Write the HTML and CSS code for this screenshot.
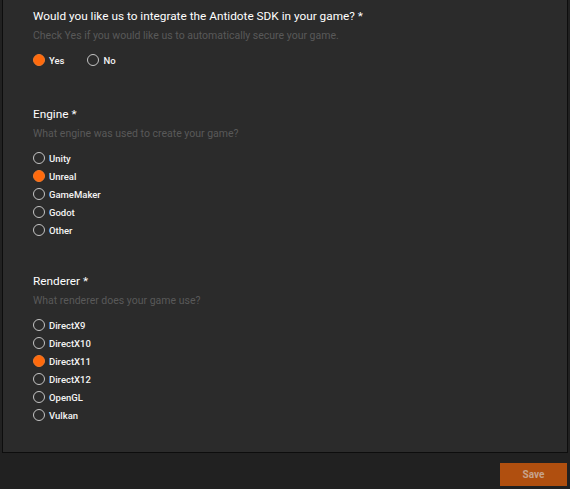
FILE: index.html
```html
<!DOCTYPE html>
<html>
<head>
<meta charset="utf-8">
<link rel="stylesheet" href="styles.css">
</head>
<body>
<div class="page">
  <div class="panel">
    <div class="question">
      <div class="q-title">Would you like us to integrate the Antidote SDK in your game? *</div>
      <div class="q-desc">Check Yes if you would like us to automatically secure your game.</div>
      <div class="options inline">
        <label class="option"><span class="radio checked"></span><span class="opt-text">Yes</span></label>
        <label class="option"><span class="radio"></span><span class="opt-text">No</span></label>
      </div>
    </div>
    <div class="question">
      <div class="q-title">Engine *</div>
      <div class="q-desc">What engine was used to create your game?</div>
      <div class="options">
        <label class="option"><span class="radio"></span><span class="opt-text">Unity</span></label>
        <label class="option"><span class="radio checked"></span><span class="opt-text">Unreal</span></label>
        <label class="option"><span class="radio"></span><span class="opt-text">GameMaker</span></label>
        <label class="option"><span class="radio"></span><span class="opt-text">Godot</span></label>
        <label class="option"><span class="radio"></span><span class="opt-text">Other</span></label>
      </div>
    </div>
    <div class="question">
      <div class="q-title">Renderer *</div>
      <div class="q-desc">What renderer does your game use?</div>
      <div class="options">
        <label class="option"><span class="radio"></span><span class="opt-text">DirectX9</span></label>
        <label class="option"><span class="radio"></span><span class="opt-text">DirectX10</span></label>
        <label class="option"><span class="radio checked"></span><span class="opt-text">DirectX11</span></label>
        <label class="option"><span class="radio"></span><span class="opt-text">DirectX12</span></label>
        <label class="option"><span class="radio"></span><span class="opt-text">OpenGL</span></label>
        <label class="option"><span class="radio"></span><span class="opt-text">Vulkan</span></label>
      </div>
    </div>
  </div>
  <div class="footer">
    <button class="save-btn">Save</button>
  </div>
</div>
</body>
</html>
```

FILE: styles.css
```css
html, body {
  margin: 0;
  padding: 0;
  background: #212121;
  font-family: Roboto, "Liberation Sans", sans-serif;
}

.page {
  width: 570px;
  height: 489px;
  display: flex;
  flex-direction: column;
  overflow: hidden;
}

.panel {
  box-sizing: border-box;
  height: 453px;
  margin: 0 2px;
  background: #2b2b2b;
  border: 1px solid #0d0d0d;
  border-top: none;
  padding: 6px 0 0 30px;
  display: flex;
  flex-direction: column;
}

.question + .question {
  margin-top: 32px;
}

.q-title {
  font-size: 11.8px;
  line-height: 20px;
  color: #ffffff;
}

.q-desc {
  font-size: 10.5px;
  line-height: 20px;
  color: #595959;
}

.options {
  margin-top: 5px;
  display: flex;
  flex-direction: column;
}

.options.inline {
  flex-direction: row;
  gap: 23px;
  padding-bottom: 3px;
}

.option {
  height: 18px;
  display: flex;
  align-items: center;
  gap: 4px;
}

.radio {
  box-sizing: border-box;
  width: 12px;
  height: 12px;
  border-radius: 50%;
  border: 1.5px solid #c4c4c4;
  flex: none;
}

.radio.checked {
  background: #ff6a0d;
  border: 1px solid #f37a2a;
}

.opt-text {
  font-size: 9.5px;
  font-weight: 500;
  color: #f4f4f4;
}

.footer {
  flex: 1;
  display: flex;
  justify-content: flex-end;
  align-items: flex-start;
  padding: 10px 3px 0 0;
}

.save-btn {
  width: 67px;
  height: 23px;
  border: none;
  background: #b04f0f;
  color: #c7a38c;
  font-family: Roboto, "Liberation Sans", sans-serif;
  font-size: 10px;
  font-weight: 700;
  padding: 0;
}
```
